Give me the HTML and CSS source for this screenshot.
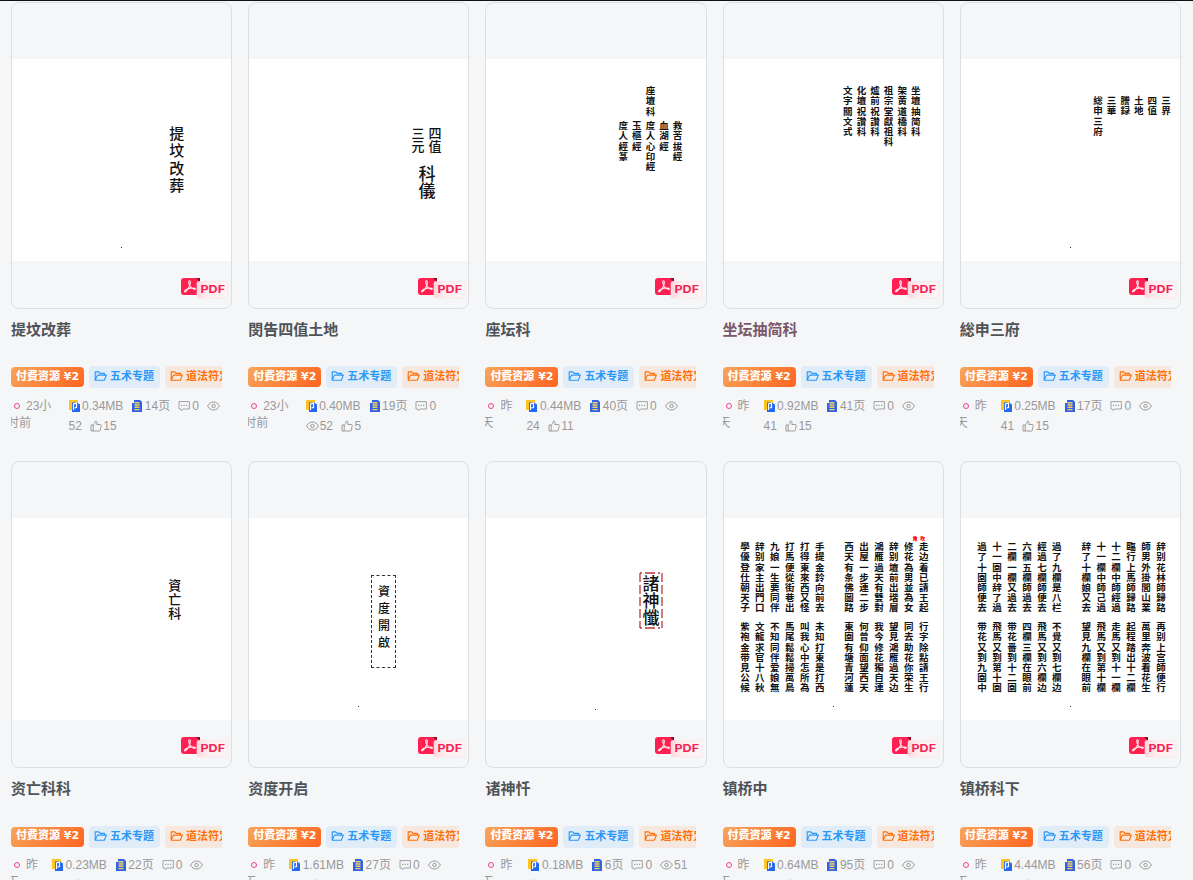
FILE: index.html
```
<!DOCTYPE html>
<html lang="zh-CN">
<head>
<meta charset="utf-8">
<meta name="viewport" content="width=device-width, initial-scale=1">
<title>五术专题</title>
<link rel="stylesheet" href="styles.css">
</head>
<body>

<svg class="sprite" width="0" height="0">
  <defs>
    <linearGradient id="label-bg" x1="0" x2="1"><stop offset="0" stop-color="#ffd5df"/><stop offset=".35" stop-color="#fdeef0"/><stop offset="1" stop-color="#fdf5f5"/></linearGradient>
  </defs>
  <symbol id="i-pdf" viewBox="0 0 48 21">
    <path d="M3 0h16v17H3a3 3 0 0 1-3-3V3a3 3 0 0 1 3-3z" fill="#ff1f50"/>
    <path d="M15 0h4v4z" fill="#8d0a25"/>
    <path d="M8.2 2.8c1.6-.6 1.3 2.6.4 5C7.500 10.400 5.800 13.600 4 13.900c-1.600-.4 1-2.700 4.500-3.500 2.500-.6 5.800-.7 6 .4-.2 1.500-3.600.1-5.200-2.300C8 6.600 7 3.600 8.200 2.800z" fill="none" stroke="#ffe3ea" stroke-width="1.100"/>
    <rect x="16" y="3.500" width="31" height="16.500" rx="1.500" fill="url(#label-bg)" stroke="#fbe3e4" stroke-width=".6"/>
    <text x="19.500" y="15.200" textLength="24.500" lengthAdjust="spacingAndGlyphs" class="pdf-text">PDF</text>
  </symbol>
  <symbol id="i-folder" viewBox="0 0 13 12">
    <path d="M1.200 10.300V1.900h3.600l1.300 1.500h4.400v1.700M1.200 10.300l2.200-5.200h9L10.300 10.300z" fill="none" stroke="currentColor" stroke-width="1.100" stroke-linejoin="round"/>
  </symbol>
  <symbol id="i-file" viewBox="0 0 12 12">
    <path d="M0 0h9v10H0z" fill="#fdc321"/>
    <path d="M3 2.500h5l3 2V12H3z" fill="#2468f2"/>
    <path d="M4.500 10V4l3-1v4.500l-2 .5" fill="none" stroke="#fff" stroke-width="1.200"/>
  </symbol>
  <symbol id="i-page" viewBox="0 0 12 12">
    <path d="M3 0h6l2 2v10H1V3h2z" fill="#2f62e6"/>
    <path d="M3.500 2.700h5M3.500 5h5M3.500 7.300h5M3.500 9.600h5" stroke="#f3cf62" stroke-width="1.400"/>
  </symbol>
  <symbol id="i-comment" viewBox="0 0 12 12">
    <path d="M1 1.600h10.400v7.400H5l-1.700 1.600-.6-1.600H1z" fill="none" stroke="currentColor" stroke-width=".9" stroke-linejoin="round"/>
    <path d="M3 5.300h1.200M5.500 5.300h1.200M8 5.300h1.200" stroke="currentColor" stroke-width="1.200"/>
  </symbol>
  <symbol id="i-eye" viewBox="0 0 13 12">
    <path d="M.6 6C2 3.400 4 2 6.500 2s4.500 1.400 5.900 4C11 8.600 9 10 6.500 10S2 8.600.6 6z" fill="none" stroke="currentColor" stroke-width="1"/>
    <circle cx="6.500" cy="6" r="1.700" fill="none" stroke="currentColor" stroke-width="1"/>
  </symbol>
  <symbol id="i-like" viewBox="0 0 12 12">
    <path d="M1 5h2.200v6H1zM3.200 5.200C4.600 4.300 5 3 5.100 1.200c1.700-.6 2.300.9 1.700 3.300h3.600c.8 0 .9.600.8 1.200l-.9 4.500c-.1.500-.4.800-.9.800H3.200" fill="none" stroke="currentColor" stroke-width=".95" stroke-linejoin="round"/>
  </symbol>
</svg>

<main class="posts">

  <article class="post">
    <div class="thumb">
      <div class="sheet sheet-1"><p>提坟改葬</p><i class="dot"></i></div>
      <svg class="pdf"><use href="#i-pdf"/></svg>
    </div>
    <h2 class="title">提坟改葬</h2>
    <div class="tags"><span class="tag paid">付费资源 ¥2</span><span class="tag blue"><svg><use href="#i-folder"/></svg>五术专题</span><span class="tag orange"><svg><use href="#i-folder"/></svg>道法符咒</span></div>
    <div class="meta">
      <div class="time hours"><i class="ring"></i>23小<br><span>时前</span></div>
      <div class="stats"><span><svg><use href="#i-file"/></svg>0.34MB</span><span><svg><use href="#i-page"/></svg>14页</span><span><svg class="comment"><use href="#i-comment"/></svg>0</span><span><svg class="eye"><use href="#i-eye"/></svg><br>52</span><span><svg><use href="#i-like"/></svg>15</span></div>
    </div>
  </article>

  <article class="post">
    <div class="thumb">
      <div class="sheet sheet-2"><p>四值</p><p>三元</p><p class="big">科儀</p></div>
      <svg class="pdf"><use href="#i-pdf"/></svg>
    </div>
    <h2 class="title">閔告四值土地</h2>
    <div class="tags"><span class="tag paid">付费资源 ¥2</span><span class="tag blue"><svg><use href="#i-folder"/></svg>五术专题</span><span class="tag orange"><svg><use href="#i-folder"/></svg>道法符咒</span></div>
    <div class="meta">
      <div class="time hours"><i class="ring"></i>23小<br><span>时前</span></div>
      <div class="stats"><span><svg><use href="#i-file"/></svg>0.40MB</span><span><svg><use href="#i-page"/></svg>19页</span><span><svg class="comment"><use href="#i-comment"/></svg>0</span><br><span><svg class="eye"><use href="#i-eye"/></svg>52</span><span><svg><use href="#i-like"/></svg>5</span></div>
    </div>
  </article>

  <article class="post">
    <div class="thumb">
      <div class="sheet list sheet-3"><p>救苦拔經</p><p>血湖經</p><p class="head">座壇科<span>度人心印經</span></p><p>玉樞經</p><p>度人經篆</p></div>
      <svg class="pdf"><use href="#i-pdf"/></svg>
    </div>
    <h2 class="title">座坛科</h2>
    <div class="tags"><span class="tag paid">付费资源 ¥2</span><span class="tag blue"><svg><use href="#i-folder"/></svg>五术专题</span><span class="tag orange"><svg><use href="#i-folder"/></svg>道法符咒</span></div>
    <div class="meta">
      <div class="time"><i class="ring"></i>昨<br><span>天</span></div>
      <div class="stats"><span><svg><use href="#i-file"/></svg>0.44MB</span><span><svg><use href="#i-page"/></svg>40页</span><span><svg class="comment"><use href="#i-comment"/></svg>0</span><span><svg class="eye"><use href="#i-eye"/></svg><br>24</span><span><svg><use href="#i-like"/></svg>11</span></div>
    </div>
  </article>

  <article class="post">
    <div class="thumb">
      <div class="sheet list sheet-4"><p>坐壇抽简科</p><p>架黄道橋科</p><p>祖宗堂獻祖科</p><p>爐前祝讚科</p><p>化壇祝讚科</p><p>文字關文式</p></div>
      <svg class="pdf"><use href="#i-pdf"/></svg>
    </div>
    <h2 class="title visited">坐坛抽简科</h2>
    <div class="tags"><span class="tag paid">付费资源 ¥2</span><span class="tag blue"><svg><use href="#i-folder"/></svg>五术专题</span><span class="tag orange"><svg><use href="#i-folder"/></svg>道法符咒</span></div>
    <div class="meta">
      <div class="time"><i class="ring"></i>昨<br><span>天</span></div>
      <div class="stats"><span><svg><use href="#i-file"/></svg>0.92MB</span><span><svg><use href="#i-page"/></svg>41页</span><span><svg class="comment"><use href="#i-comment"/></svg>0</span><span><svg class="eye"><use href="#i-eye"/></svg><br>41</span><span><svg><use href="#i-like"/></svg>15</span></div>
    </div>
  </article>

  <article class="post">
    <div class="thumb">
      <div class="sheet list sheet-5"><p>三界</p><p>四值</p><p>土地</p><p>謄録</p><p>三華</p><p>総申三府</p><i class="dot"></i></div>
      <svg class="pdf"><use href="#i-pdf"/></svg>
    </div>
    <h2 class="title">総申三府</h2>
    <div class="tags"><span class="tag paid">付费资源 ¥2</span><span class="tag blue"><svg><use href="#i-folder"/></svg>五术专题</span><span class="tag orange"><svg><use href="#i-folder"/></svg>道法符咒</span></div>
    <div class="meta">
      <div class="time"><i class="ring"></i>昨<br><span>天</span></div>
      <div class="stats"><span><svg><use href="#i-file"/></svg>0.25MB</span><span><svg><use href="#i-page"/></svg>17页</span><span><svg class="comment"><use href="#i-comment"/></svg>0</span><span><svg class="eye"><use href="#i-eye"/></svg><br>41</span><span><svg><use href="#i-like"/></svg>15</span></div>
    </div>
  </article>

  <article class="post">
    <div class="thumb">
      <div class="sheet sheet-6"><p>資亡科</p></div>
      <svg class="pdf"><use href="#i-pdf"/></svg>
    </div>
    <h2 class="title">资亡科科</h2>
    <div class="tags"><span class="tag paid">付费资源 ¥2</span><span class="tag blue"><svg><use href="#i-folder"/></svg>五术专题</span><span class="tag orange"><svg><use href="#i-folder"/></svg>道法符咒</span></div>
    <div class="meta">
      <div class="time"><i class="ring"></i>昨<br><span>天</span></div>
      <div class="stats"><span><svg><use href="#i-file"/></svg>0.23MB</span><span><svg><use href="#i-page"/></svg>22页</span><span><svg class="comment"><use href="#i-comment"/></svg>0</span><span><svg class="eye"><use href="#i-eye"/></svg><br>34</span><span><svg><use href="#i-like"/></svg>9</span></div>
    </div>
  </article>

  <article class="post">
    <div class="thumb">
      <div class="sheet sheet-7"><p>資度開啟</p><i class="dot"></i></div>
      <svg class="pdf"><use href="#i-pdf"/></svg>
    </div>
    <h2 class="title">资度开启</h2>
    <div class="tags"><span class="tag paid">付费资源 ¥2</span><span class="tag blue"><svg><use href="#i-folder"/></svg>五术专题</span><span class="tag orange"><svg><use href="#i-folder"/></svg>道法符咒</span></div>
    <div class="meta">
      <div class="time"><i class="ring"></i>昨<br><span>天</span></div>
      <div class="stats"><span><svg><use href="#i-file"/></svg>1.61MB</span><span><svg><use href="#i-page"/></svg>27页</span><span><svg class="comment"><use href="#i-comment"/></svg>0</span><span><svg class="eye"><use href="#i-eye"/></svg><br>47</span><span><svg><use href="#i-like"/></svg>9</span></div>
    </div>
  </article>

  <article class="post">
    <div class="thumb">
      <div class="sheet sheet-8">
        <p>諸神懺<svg class="frame" viewBox="0 0 24 57"><path d="M1 1v55M23 1v55" stroke-dasharray="9 3"/><path d="M1 1h22M1 56h22" stroke-dasharray="2 3 10 3"/></svg></p><i class="dot low"></i></div>
      <svg class="pdf"><use href="#i-pdf"/></svg>
    </div>
    <h2 class="title">诸神忏</h2>
    <div class="tags"><span class="tag paid">付费资源 ¥2</span><span class="tag blue"><svg><use href="#i-folder"/></svg>五术专题</span><span class="tag orange"><svg><use href="#i-folder"/></svg>道法符咒</span></div>
    <div class="meta">
      <div class="time wide"><i class="ring"></i>昨<br><span>天</span></div>
      <div class="stats"><span><svg><use href="#i-file"/></svg>0.18MB</span><span><svg><use href="#i-page"/></svg>6页</span><span><svg class="comment"><use href="#i-comment"/></svg>0</span><span><svg class="eye"><use href="#i-eye"/></svg>51</span><br><span><svg><use href="#i-like"/></svg>9</span></div>
    </div>
  </article>

  <article class="post">
    <div class="thumb">
      <div class="sheet full">
        <p>走边着已請王起<span>行字除點請王行</span></p>
        <p>修花為男並為女<span>同去助花你荣生</span></p>
        <p>辞别壇前出堦層<span>望見鴻雁過天边</span></p>
        <p>鴻雁過天有雙對<span>我今修花獨自連</span></p>
        <p>出屋一步連二步<span>何曾仰面望西天</span></p>
        <p>西天有条佛圖路<span>東園有塘青河蓮</span></p>
        <p class="fold">手提金鈴向前去<span>未知打東是打西</span></p>
        <p>打得東來西又怪<span>叫我心中怎所為</span></p>
        <p>打馬便從街巷出<span>馬尾鬆鬆掃萬鳥</span></p>
        <p>九娘一生要同伴<span>不知同伴爱娘無</span></p>
        <p>辞别家主出門口<span>文龍求官十八秋</span></p>
        <p>學優登仕朝天子<span>紫袍金带見公候</span></p>
        <b class="mark">角 吹</b><i class="dot"></i>
      </div>
      <svg class="pdf"><use href="#i-pdf"/></svg>
    </div>
    <h2 class="title">镇桥中</h2>
    <div class="tags"><span class="tag paid">付费资源 ¥2</span><span class="tag blue"><svg><use href="#i-folder"/></svg>五术专题</span><span class="tag orange"><svg><use href="#i-folder"/></svg>道法符咒</span></div>
    <div class="meta">
      <div class="time"><i class="ring"></i>昨<br><span>天</span></div>
      <div class="stats"><span><svg><use href="#i-file"/></svg>0.64MB</span><span><svg><use href="#i-page"/></svg>95页</span><span><svg class="comment"><use href="#i-comment"/></svg>0</span><span><svg class="eye"><use href="#i-eye"/></svg><br>57</span><span><svg><use href="#i-like"/></svg>9</span></div>
    </div>
  </article>

  <article class="post">
    <div class="thumb">
      <div class="sheet full">
        <p>辞别花林師歸路<span>再别上宫師便行</span></p>
        <p>師男外掛閭山業<span>萬里奔波看花生</span></p>
        <p>臨行上馬師歸路<span>起程踏出十二欄</span></p>
        <p>十二欄中師經過<span>走馬又到十一欄</span></p>
        <p>十一欄中師己過<span>飛馬又到第十欄</span></p>
        <p>辞了十欄娘又去<span>望見九欄在眼前</span></p>
        <p class="fold">過了九欄是八栏<span>不覺又到七欄边</span></p>
        <p>經過七欄師便去<span>飛馬又到六欄边</span></p>
        <p>六欄五欄師過去<span>四欄三欄在眼前</span></p>
        <p>二欄一欄又過去<span>带花番到十二園</span></p>
        <p>十一園中辞了過<span>飛馬又到第十園</span></p>
        <p>過了十園師便去<span>带花又到九園中</span></p>
        <i class="dot"></i>
      </div>
      <svg class="pdf"><use href="#i-pdf"/></svg>
    </div>
    <h2 class="title">镇桥科下</h2>
    <div class="tags"><span class="tag paid">付费资源 ¥2</span><span class="tag blue"><svg><use href="#i-folder"/></svg>五术专题</span><span class="tag orange"><svg><use href="#i-folder"/></svg>道法符咒</span></div>
    <div class="meta">
      <div class="time"><i class="ring"></i>昨<br><span>天</span></div>
      <div class="stats"><span><svg><use href="#i-file"/></svg>4.44MB</span><span><svg><use href="#i-page"/></svg>56页</span><span><svg class="comment"><use href="#i-comment"/></svg>0</span><span><svg class="eye"><use href="#i-eye"/></svg><br>62</span><span><svg><use href="#i-like"/></svg>9</span></div>
    </div>
  </article>

</main>
</body>
</html>
```
FILE: styles.css
```
* {
    box-sizing: border-box;
}

html {
    overflow: hidden;
}

body {
    margin: 0;
    height: 880px;
    overflow: hidden;
    border-top: 1px solid #111;
    background: #f5f6f8;
    color: #999;
    font: 12px/20px "Liberation Sans", "Noto Sans CJK SC", sans-serif;
}

h2, p {
    margin: 0;
}

i {
    font-style: normal;
}

.sprite {
    display: block;
}

.posts {
    display: grid;
    grid-template-columns: repeat(5, 221.2px);
    grid-auto-rows: 459.2px;
    column-gap: 16px;
    padding: 1px 0 0 11px;
}

/* cover */

.thumb {
    position: relative;
    height: 307px;
    padding-top: 56px;
    border: 1px solid #dcdee0;
    border-radius: 8px;
}

.pdf {
    position: absolute;
    right: 2.500px;
    bottom: 9px;
    width: 48px;
    height: 21px;
}

.pdf-text {
    font: 700 11px Inter, sans-serif;
    fill: #f52556;
}

.sheet {
    position: relative;
    width: 100%;
    height: 202px;
    background: #fff;
    color: #111;
    font-family: "Noto Sans CJK TC", sans-serif;
    font-weight: 500;
    writing-mode: vertical-rl;
    white-space: nowrap;
}

.dot {
    position: absolute;
    left: 109px;
    top: 187.500px;
    width: 1px;
    height: 1px;
    background: #333;
}

.dot.low {
    top: 190.500px;
}

.sheet-1 {
    padding: 67px 45px 0 0;
    font-size: 15px;
    line-height: 20px;
    letter-spacing: 2.2px;
}

.sheet-2 {
    padding: 68px 25px 0 0;
    font-size: 13px;
    line-height: 17px;
}

.sheet-2 .big {
    margin: 38px -26px 0 0;
    font-size: 17px;
}

/* contents lists, one title per column */

.list {
    font-size: 9.5px;
    font-weight: 700;
    line-height: 13.6px;
    letter-spacing: .6px;
}

.sheet-3 {
    padding: 62px 22px 0 0;
}

.sheet-3 .head {
    margin-top: -35px;
}

.sheet-3 .head span {
    margin-top: 5px;
}

.sheet-4 {
    padding: 27px 21px 0 0;
}

.sheet-5 {
    padding: 37px 8px 0 0;
}

.sheet-6 {
    padding: 61px 47px 0 0;
    font-size: 13px;
    letter-spacing: .6px;
}

.sheet-7 {
    padding: 57px 72px 0 0;
    font-size: 12px;
}

.sheet-7 p {
    width: 25px;
    height: 93px;
    padding-top: 9px;
    border: 1px dashed #333;
    line-height: 23px;
    letter-spacing: 5.2px;
}

.sheet-8 {
    padding: 54px 43px 0 0;
    font-size: 17px;
}

.sheet-8 p {
    position: relative;
    width: 24px;
    height: 57px;
    padding-top: 3px;
    line-height: 24px;
}

.frame {
    position: absolute;
    left: 0;
    top: 0;
    width: 24px;
    height: 57px;
    fill: none;
    stroke: #b8383c;
    stroke-width: 1.3px;
}

/* full pages of verse */

.full {
    padding: 24px 12px 0 0;
    font-size: 9.5px;
    font-weight: 700;
    line-height: 14.95px;
    letter-spacing: .6px;
}

.full span {
    margin-top: 9.600px;
}

.full .fold {
    margin-right: 14.4px;
}

.mark {
    position: absolute;
    left: 189px;
    top: 17px;
    color: #f00;
    font-size: 5px;
    line-height: 6px;
    letter-spacing: .8px;
    writing-mode: horizontal-tb;
}

/* text under the cover */

.title {
    height: 40px;
    margin-top: 8px;
    padding-top: 1px;
    color: #4e5358;
    font-size: 15px;
    line-height: 24px;
}

.title.visited {
    color: #7a566a;
}

.tags {
    display: flex;
    align-items: center;
    gap: 5px;
    width: 211px;
    height: 22px;
    margin-top: 9.4px;
    overflow: hidden;
}

.tag {
    display: flex;
    flex: none;
    align-items: center;
    height: 22px;
    padding: 0 6px 2px 5px;
    border-radius: 4px;
    font-size: 11px;
    font-weight: 700;
}

.tag svg {
    width: 13px;
    height: 12px;
    margin-right: 3px;
}

.paid {
    width: 73px;
    height: 20px;
    padding-bottom: 1px;
    background: linear-gradient(135deg, #f6a65c, #ff6420);
    color: #fff;
    font-family: "DejaVu Sans", "Noto Sans CJK SC", sans-serif;
    font-weight: 900;
    white-space: nowrap;
}

.blue {
    background: #e0ecf8;
    color: #2997f7;
}

.orange {
    background: #f7e8df;
    color: #ff6f06;
}

.meta {
    display: flex;
    margin-top: 7.600px;
    white-space: nowrap;
}

.time {
    flex: none;
    width: 41px;
    overflow: hidden;
    line-height: 17px;
    padding-top: 2px;
}

.time.hours {
    width: 57.500px;
}

.time.wide {
    width: 43px;
}

.time span {
    margin-left: -4px;
}

.ring {
    display: inline-block;
    width: 6px;
    height: 6px;
    margin: 0 6px 1px 3px;
    border: 1px solid #f0409a;
    border-radius: 50%;
}

.stats > span {
    margin-right: 8px;
}

.stats svg {
    width: 12px;
    height: 12px;
    margin-right: 1.500px;
    vertical-align: -2px;
}

.stats .comment {
    margin-right: 2px;
}

.stats .eye {
    width: 13px;
    margin-right: 1px;
}
```
